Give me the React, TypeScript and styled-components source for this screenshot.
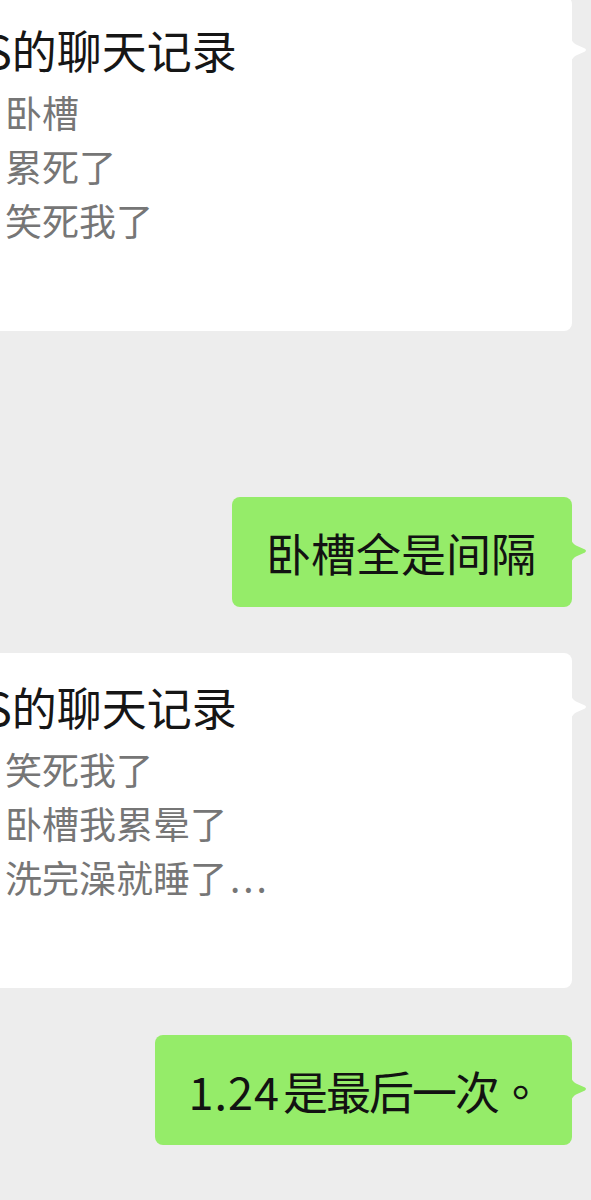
import React from "react";
import styled, { createGlobalStyle } from "styled-components";

const GlobalStyle = createGlobalStyle`
  html, body {
    margin: 0;
    padding: 0;
    background: #ededed;
    overflow: hidden;
  }
  body {
    font-family: "Noto Sans CJK SC", "Noto Sans", sans-serif;
    -webkit-font-smoothing: antialiased;
  }
`;

const Page = styled.div`
  display: flex;
  flex-direction: column;
  width: 591px;
  height: 1200px;
  overflow: hidden;
  margin-top: -4px;
`;

const Row = styled.div<{ $gap: number }>`
  display: flex;
  justify-content: flex-end;
  padding-right: 19px;
  margin-top: ${(p) => p.$gap}px;
`;

const Bubble = styled.div<{ $bg: string }>`
  position: relative;
  background: ${(p) => p.$bg};
  border-radius: 8px;
`;

const Card = styled(Bubble)`
  flex: 1;
  margin-left: -40px;
  height: 335px;
  box-sizing: border-box;
  padding: 24px 0 0 25px;
`;

const Title = styled.div`
  font-size: 45px;
  line-height: 60px;
  color: #161616;
  white-space: nowrap;
`;

const Lines = styled.div`
  margin-top: 5px;
  padding-left: 20px;
  display: flex;
  flex-direction: column;
`;

const Line = styled.div`
  font-size: 37px;
  line-height: 54px;
  color: #767676;
  white-space: nowrap;
`;

const Dots = styled.span`
  margin-left: 3px;
  letter-spacing: 3px;
`;

const Message = styled(Bubble)`
  box-sizing: border-box;
  height: 110px;
  padding: 0 36px 0 34px;
  display: flex;
  align-items: center;
  font-size: 45px;
  color: #121212;
  white-space: nowrap;
`;

const Digits = styled.span`
  letter-spacing: 1px;
  margin-right: 3px;
`;

const Tight = styled.span`
  letter-spacing: -2px;
`;

const Punct = styled.span`
  font-family: "Noto Sans CJK TC", sans-serif;
  margin-right: -7px;
`;

const TailSvg = styled.svg`
  position: absolute;
  right: -15px;
  top: 42px;
  width: 16px;
  height: 24px;
  display: block;
`;

const Tail = ({ color }: { color: string }) => (
  <TailSvg viewBox="0 0 16 24">
    <path
      d="M0 0 Q1 4 5 6.5 L14 10.6 Q16 12 14 13.4 L5 17.5 Q1 20 0 24 Z"
      fill={color}
    />
  </TailSvg>
);

const GREEN = "#95ec69";

export default function App() {
  return (
    <>
      <GlobalStyle />
      <Page>
        <Row $gap={0}>
          <Card $bg="#ffffff">
            <Title>S的聊天记录</Title>
            <Lines>
              <Line>卧槽</Line>
              <Line>累死了</Line>
              <Line>笑死我了</Line>
            </Lines>
            <Tail color="#ffffff" />
          </Card>
        </Row>
        <Row $gap={166}>
          <Message $bg={GREEN}>
            卧槽全是间隔
            <Tail color={GREEN} />
          </Message>
        </Row>
        <Row $gap={46}>
          <Card $bg="#ffffff">
            <Title>S的聊天记录</Title>
            <Lines>
              <Line>笑死我了</Line>
              <Line>卧槽我累晕了</Line>
              <Line>
                洗完澡就睡了<Dots>...</Dots>
              </Line>
            </Lines>
            <Tail color="#ffffff" />
          </Card>
        </Row>
        <Row $gap={47}>
          <Message $bg={GREEN}>
            <Digits>1.24</Digits>
            <Tight>是最后一次</Tight>
            <Punct>。</Punct>
            <Tail color={GREEN} />
          </Message>
        </Row>
      </Page>
    </>
  );
}
